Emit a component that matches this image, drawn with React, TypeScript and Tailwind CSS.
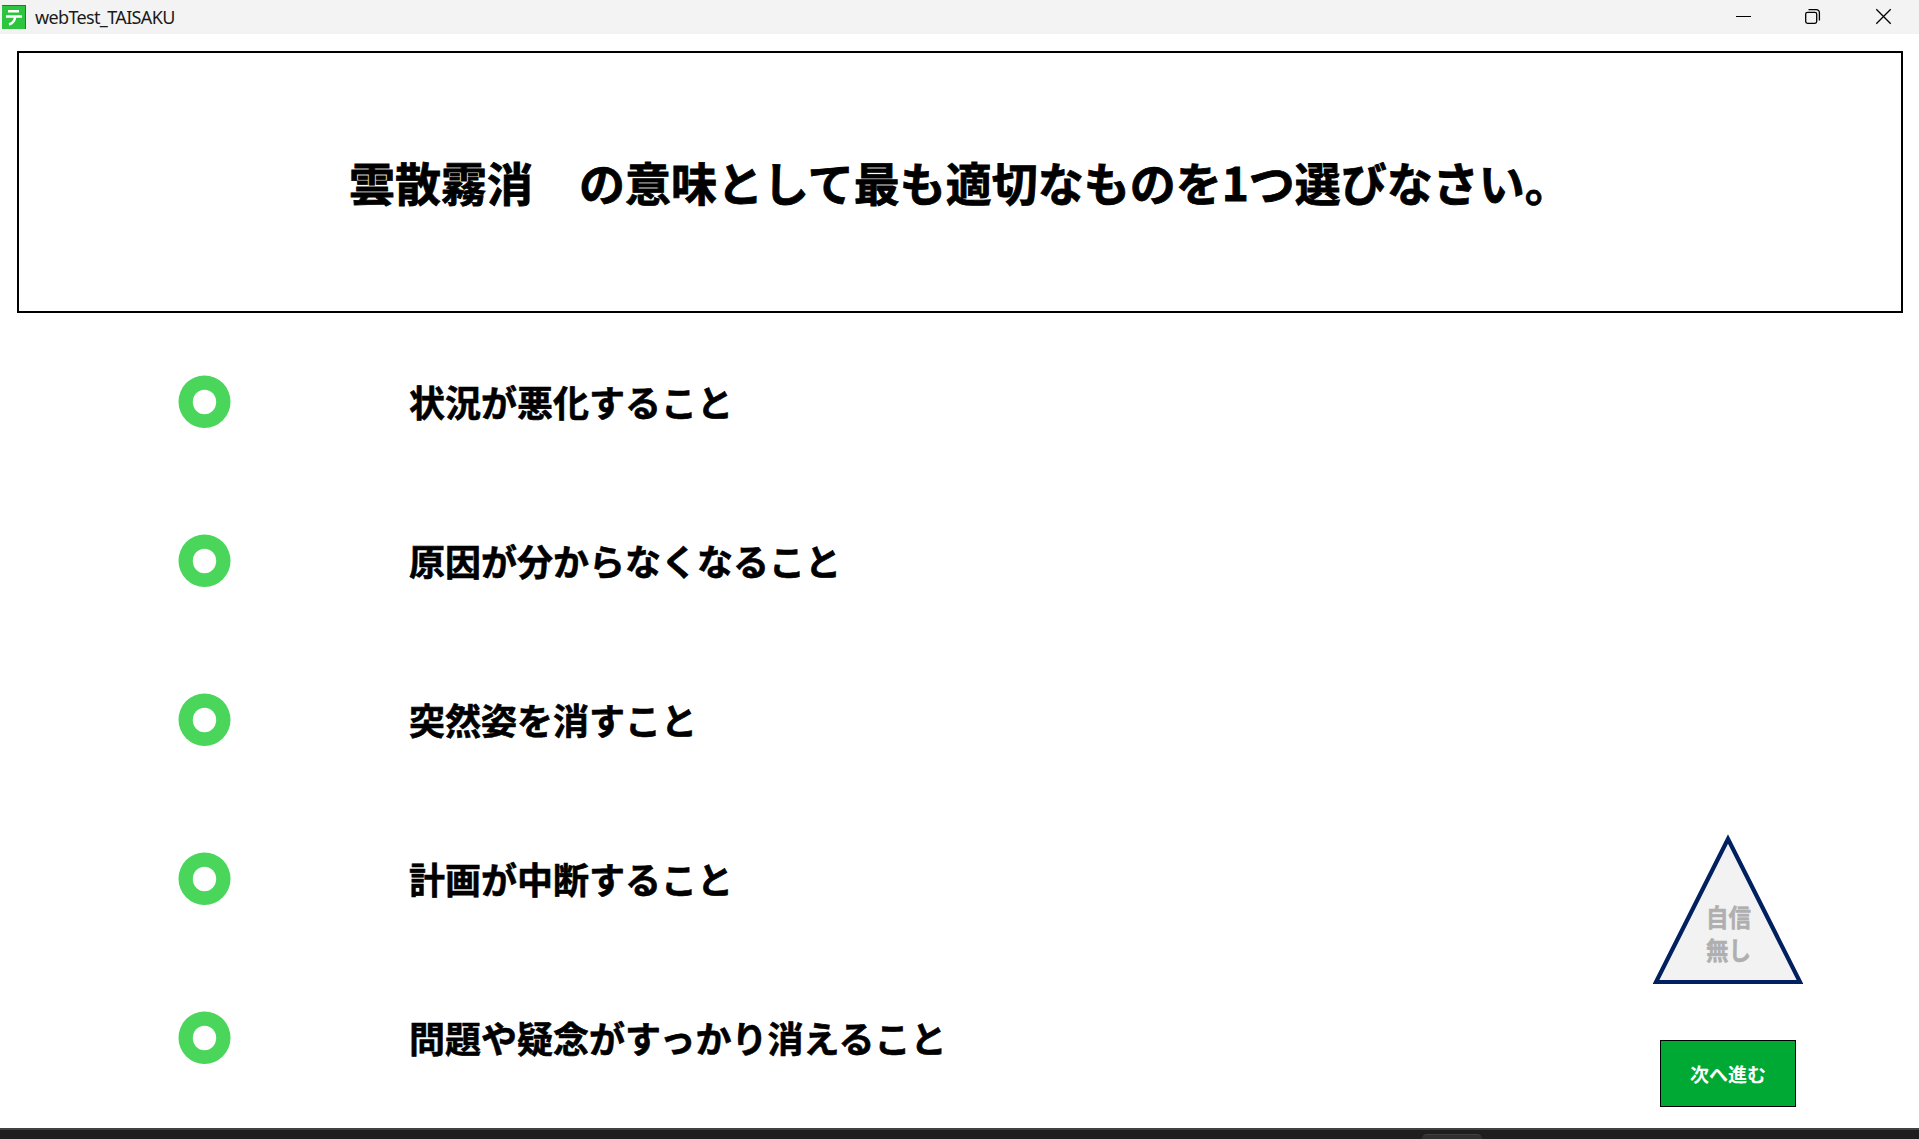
const options = [
  "状況が悪化すること",
  "原因が分からなくなること",
  "突然姿を消すこと",
  "計画が中断すること",
  "問題や疑念がすっかり消えること",
];

const TitleBar = () => {
  return (
    <header className="flex h-[34px] shrink-0 items-center bg-[#f3f3f3]">
      <svg className="ml-0.5 h-6 w-6" viewBox="0 0 24 24">
        <rect width="24" height="24" fill="#16803a" />
        <path d="M0 1h23v23H0z" fill="#2dc53f" />
        <path d="M6 6.3h11M4 11.5h16M13 11.5q0 6-6 8" fill="none" stroke="#fff" strokeWidth="2.4" />
      </svg>
      <span className="ml-[9px] flex-1 font-['Noto_Sans',sans-serif] text-[18px] tracking-[-0.65px] text-[#1a1a1a]">
        webTest_TAISAKU
      </span>
      <svg className="h-[34px] w-[219px]" viewBox="0 0 219 34" fill="none" stroke="#000" strokeWidth="1.3">
        <path d="M36 16.5h15" strokeWidth="1" />
        <path d="M176.3 9.3l14.4 14.4M190.7 9.3l-14.4 14.4" />
        <rect x="105.7" y="12.3" width="11" height="11" rx="1.8" />
        <path d="M108.5 9.6h7.5q3.4 0 3.4 3.4v7.5" />
      </svg>
    </header>
  );
};

const App = () => {
  return (
    <div className="flex h-[1139px] w-[1919px] flex-col overflow-hidden bg-white font-['Noto_Sans_CJK_JP',sans-serif] text-black">
      <TitleBar />

      <section className="mt-[17px] mr-4 ml-[17px] flex h-[262px] shrink-0 items-center justify-center border-2 border-black pb-0.5">
        <h1 className="text-[46px] font-bold [-webkit-text-stroke:0.8px_black]">
          雲散霧消　の意味として最も適切なものを1つ選びなさい。
        </h1>
      </section>

      <main className="flex min-h-0 flex-1 justify-between">
        <ul className="mt-[9px] ml-[178px]">
          {options.map((option) => (
            <li key={option} className="flex h-[159px] items-center">
              <svg className="h-[53px] w-[53px]" viewBox="0 0 53 53">
                <ellipse cx="26.5" cy="26.7" rx="26" ry="26.3" fill="#49d65b" />
                <ellipse cx="26.5" cy="27" rx="11.7" ry="12.2" fill="#fff" />
              </svg>
              <span className="ml-[178px] pb-0.5 text-[36px] font-bold [-webkit-text-stroke:0.6px_black]">
                {option}
              </span>
            </li>
          ))}
        </ul>
        <div className="mt-[520px] mr-[116px] flex flex-col items-center">
          <div className="relative">
            <svg className="h-[152px] w-[150px]" viewBox="0 0 150 152">
              <path d="M75 6 147 149H3Z" fill="#f2f2f2" stroke="#002060" strokeWidth="4.2" />
            </svg>
            <div className="absolute inset-x-0 top-[67px] pl-px text-center text-[22.5px] leading-[33px] font-bold text-[#afafaf] [-webkit-text-stroke:0.5px_#afafaf]">
              <p className="scale-y-110">自信</p>
              <p className="scale-y-110">無し</p>
            </div>
          </div>
          <button className="mt-[55px] h-[67px] w-[136px] border border-black bg-[#00a933] pt-0.5 text-[19px] font-bold text-white">
            次へ進む
          </button>
        </div>
      </main>

      {/* top edge of the taskbar */}
      <footer className="flex h-[11px] shrink-0 items-end border-t-2 border-[#404040] bg-[#1e1e1e] pl-[1422px]">
        <div className="h-[5px] w-[60px] rounded-t-md border-t border-[#404040] bg-[#303030]" />
      </footer>
    </div>
  );
};

export default App;
